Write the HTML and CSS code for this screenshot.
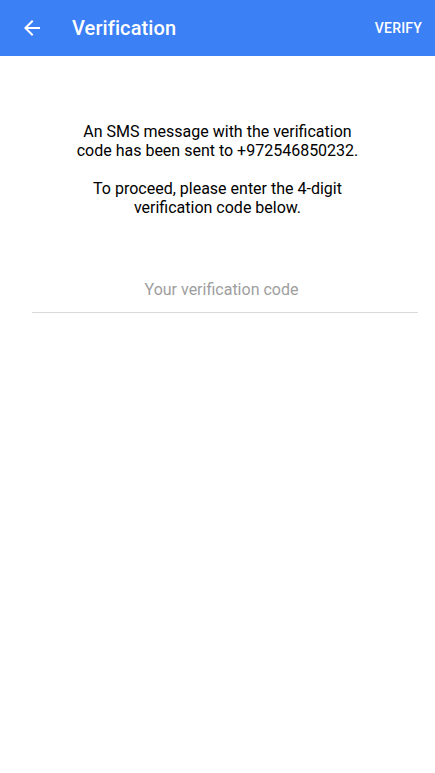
FILE: index.html
```html
<!DOCTYPE html>
<html>
<head>
<meta charset="utf-8">
<link rel="stylesheet" href="styles.css">
</head>
<body>
<header class="appbar">
  <button class="back" aria-label="Back">
    <svg width="24" height="24" viewBox="0 0 24 24"><path fill="#fff" d="M20 11H7.83l5.59-5.59L12 4l-8 8 8 8 1.41-1.41L7.83 13H20v-2z"/></svg>
  </button>
  <h1 class="title">Verification</h1>
  <button class="action">VERIFY</button>
</header>
<main class="content">
  <div class="message">
    <p>An SMS message with the verification code has been sent to +972546850232.</p>
    <p>To proceed, please enter the 4-digit verification code below.</p>
  </div>
  <div class="field">
    <input class="code" type="text" placeholder="Your verification code">
  </div>
</main>
</body>
</html>
```
FILE: styles.css
```css
* { box-sizing: border-box; }
html, body { margin: 0; padding: 0; background: #fff; }
body { font-family: Roboto, "Noto Sans", sans-serif; color: #000; }
.appbar {
  height: 56px;
  background: #3b80f4;
  display: flex;
  align-items: center;
  color: #fff;
}
.back {
  width: 24px; height: 24px;
  margin-left: 20px;
  padding: 0; border: 0; background: none;
  display: flex;
}
.title {
  margin: 0 0 0 28px;
  font-size: 20px;
  font-weight: 500;
  flex: 1;
  letter-spacing: 0.1px;
}
.action {
  border: 0; background: none; color: #fff;
  font-family: inherit;
  font-size: 14px;
  font-weight: 500;
  padding: 0;
  margin-right: 13px;
  letter-spacing: 0.2px;
}
.content {
  display: flex;
  flex-direction: column;
  align-items: center;
  padding-top: 66px;
}
.message {
  width: 290px;
  text-align: center;
  font-size: 16px;
  line-height: 19px;
}
.message p { margin: 0 0 19px 0; }
.field {
  align-self: stretch;
  margin: 37px 17px 0 32px;
}
.code {
  width: 100%;
  border: 0;
  border-bottom: 1px solid #d9d9d9;
  font-family: inherit;
  font-size: 16px;
  text-align: center;
  padding: 7px 7px 13px 0;
  outline: none;
  line-height: 19px;
}
.code::placeholder { color: #9e9e9e; }
```
